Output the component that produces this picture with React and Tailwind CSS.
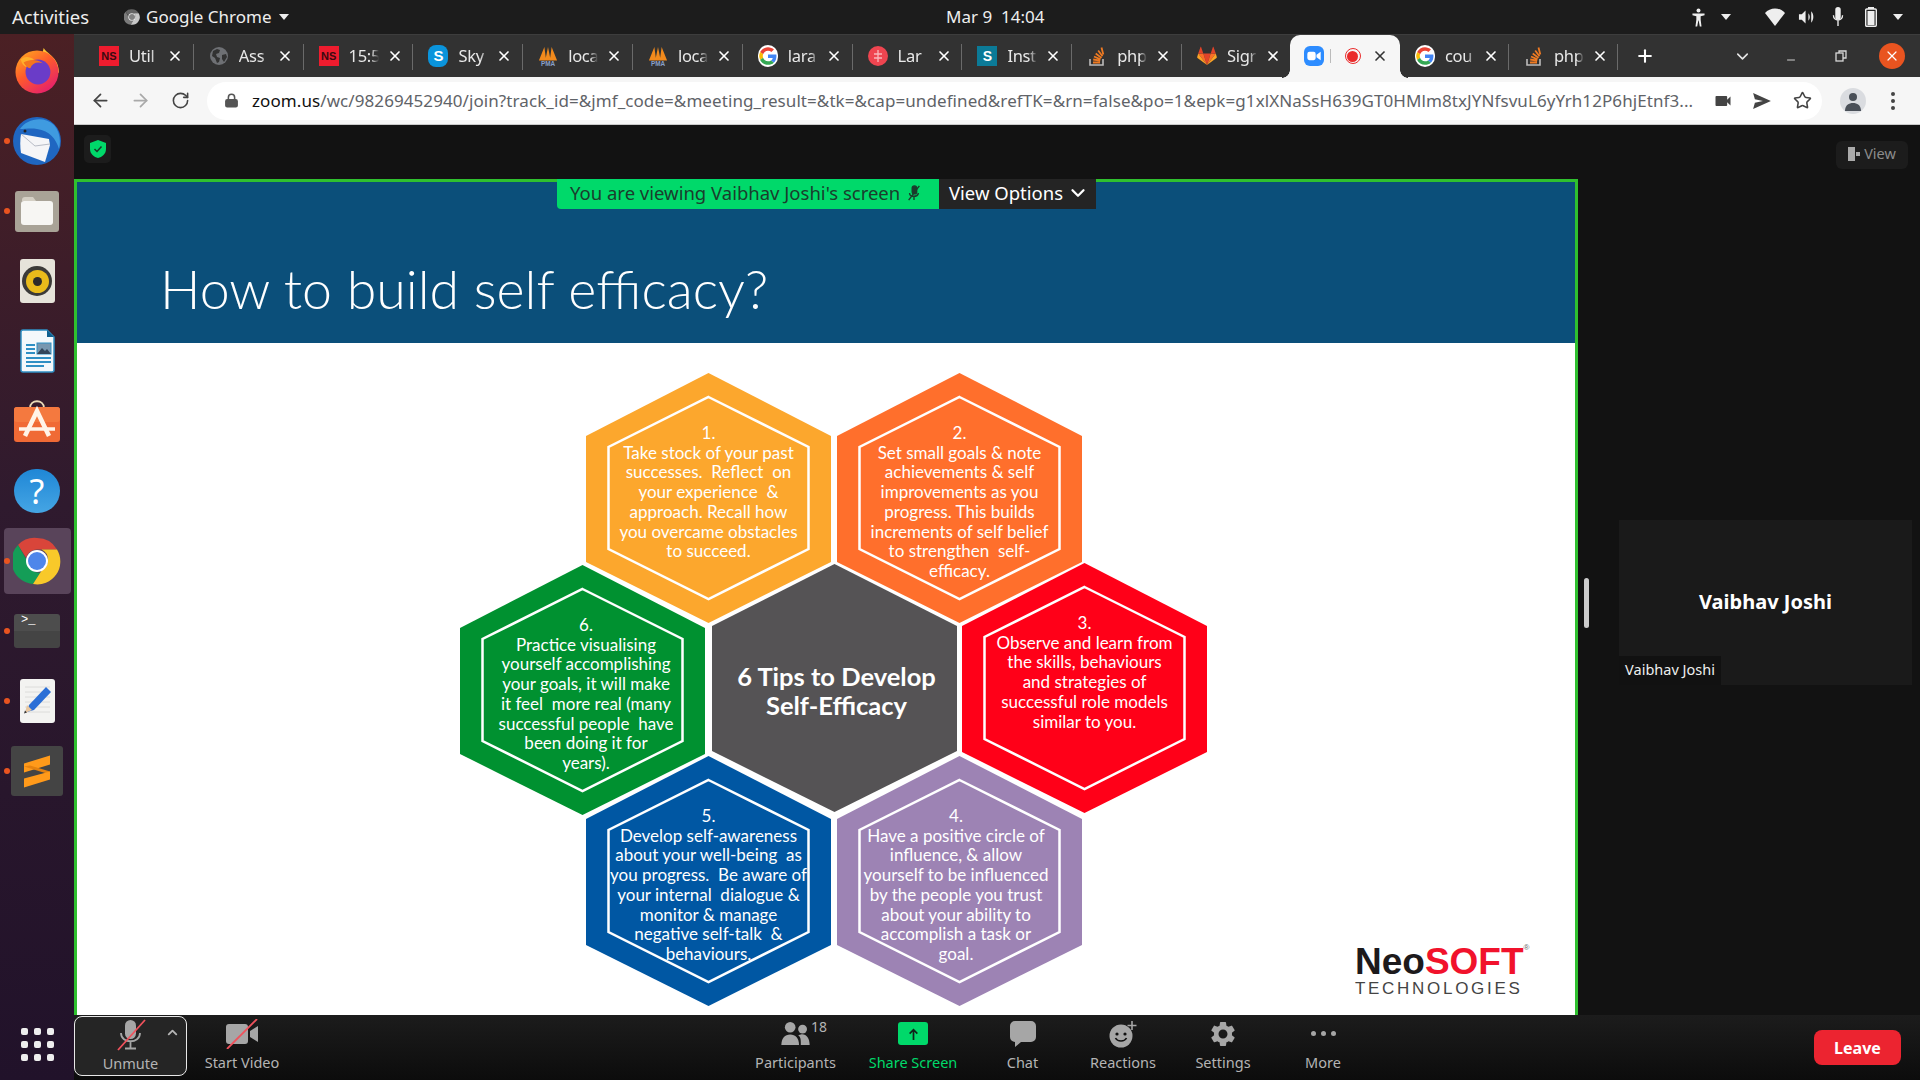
import { ArrowLeft, ArrowRight, RotateCw, Lock, Star, X, Plus, ChevronDown, ChevronUp, Minus } from "lucide-react"
import { MdSettings, MdVideocam } from "react-icons/md"

// favicons for the browser tabs
function NsIcon() {
  return (
    <span className="flex h-[20px] w-[20px] items-center justify-center bg-[#ee1c2e] font-['Liberation_Sans'] text-[11px] font-bold text-[#3a0a10]">NS</span>
  )
}

function GoogleIcon() {
  return (
    <svg viewBox="0 0 48 48" className="h-[22px] w-[22px] rounded-full bg-white p-[1px]">
      <path fill="#ea4335" d="M24 10c3.5 0 6.600 1.200 9.100 3.500l6.800-6.800C35.700 2.900 30.300.5 24 .5 14.800.5 6.900 5.800 3 13.500l7.900 6.100C12.800 14 17.900 10 24 10z" />
      <path fill="#4285f4" d="M46.500 24.500c0-1.600-.1-3.100-.4-4.500H24v9h12.700c-.6 2.900-2.200 5.400-4.700 7l7.600 5.900c4.400-4.100 6.900-10.100 6.900-17.400z" />
      <path fill="#fbbc05" d="M10.900 28.400c-.5-1.400-.8-2.900-.8-4.400s.3-3 .8-4.400L3 13.500C1.400 16.700.5 20.200.5 24s.9 7.300 2.500 10.500l7.900-6.100z" />
      <path fill="#34a853" d="M24 47.500c6.300 0 11.700-2.100 15.600-5.700L32 35.900c-2.100 1.400-4.800 2.300-8 2.300-6.100 0-11.200-4.100-13.100-9.700L3 34.500C6.900 42.200 14.800 47.500 24 47.500z" />
    </svg>
  )
}

function GlobeIcon() {
  return (
    <svg viewBox="0 0 20 20" className="h-[20px] w-[20px]">
      <circle cx="10" cy="10" r="9" fill="#6e7074" />
      <path fill="#323232" d="M4 5l4-2 3 1-1 3-3 1 1 3 3 1-1 4-2 1-2-5-3-2zM13 9l4-1 1 3-3 5-2-3z" />
    </svg>
  )
}

function SkypeIcon() {
  return (
    <span className="flex h-[22px] w-[20px] items-center justify-center rounded-[8px] bg-[#0a94dc] font-['Liberation_Sans'] text-[15px] font-bold text-white">S</span>
  )
}

function PmaIcon() {
  return (
    <svg viewBox="0 0 22 24" className="h-[24px] w-[21px]">
      <path fill="#f28a1c" d="M1 17L7 2l2 15zM8 17l3-15 3 15zM13 17L15 2l6 15z" />
      <text x="11" y="23" textAnchor="middle" fontSize="7" fontWeight="700" fill="#8aa0c8" fontFamily="Liberation Sans">PMA</text>
    </svg>
  )
}

function LaravelIcon() {
  return (
    <svg viewBox="0 0 20 20" className="h-[20px] w-[20px]">
      <circle cx="10" cy="10" r="10" fill="#ef4550" />
      <path stroke="#f9b7bb" strokeWidth="1.300" fill="none" d="M10 4v12M6 8h8M6 12h8" />
    </svg>
  )
}

function TealSIcon() {
  return (
    <span className="flex h-[20px] w-[20px] items-center justify-center bg-[#0b7a97] font-['Liberation_Sans'] text-[14px] font-bold text-white">S</span>
  )
}

function StackIcon() {
  return (
    <svg viewBox="0 0 20 22" className="h-[22px] w-[20px]" fill="none">
      <path stroke="#bcbbbb" strokeWidth="1.600" d="M3 14v6h13v-6" />
      <path stroke="#ef7a22" strokeWidth="1.800" d="M6 17.500h7M6.200 14.500l7 1.200M7 11.500l6.500 2.800M8.700 8.500l5.800 4.400M11.200 5.500l4.300 5.800M14.500 2.500l1.800 7" />
    </svg>
  )
}

function GitlabIcon() {
  return (
    <svg viewBox="0 0 20 20" className="h-[22px] w-[22px]">
      <path fill="#e24329" d="M10 19L13.700 7.500H6.300z" />
      <path fill="#fc6d26" d="M10 19L6.300 7.500H1.200zM10 19l3.700-11.500h5.100z" />
      <path fill="#fca326" d="M1.200 7.500L.2 11c-.1.400 0 .7.300.9L10 19zM18.800 7.500l1 3.500c.1.400 0 .7-.3.900L10 19z" />
      <path fill="#e24329" d="M1.200 7.500h5.100L4.100 1c-.1-.3-.5-.3-.6 0zM18.800 7.500h-5.100L15.900 1c.1-.3.500-.3.600 0z" />
    </svg>
  )
}

function ZoomTabIcon() {
  return (
    <span className="flex h-[20px] w-[20px] items-center justify-center rounded-[6px] bg-[#2d8cff]">
      <svg viewBox="0 0 16 12" className="h-[10px] w-[14px]" fill="white">
        <rect x="0" y="1" width="10" height="10" rx="2.500" />
        <path d="M11 4.500L16 1v10l-5-3.500z" />
      </svg>
    </span>
  )
}

function RecordIcon() {
  return (
    <span className="flex h-[16px] w-[16px] items-center justify-center rounded-full border border-[#ea2b2b]">
      <span className="h-[11px] w-[11px] rounded-full bg-[#ea2b2b]" />
    </span>
  )
}

const tabs = [
  { icon: <NsIcon />, title: "Util" },
  { icon: <GlobeIcon />, title: "Ass" },
  { icon: <NsIcon />, title: "15:5" },
  { icon: <SkypeIcon />, title: "Sky" },
  { icon: <PmaIcon />, title: "loca" },
  { icon: <PmaIcon />, title: "loca" },
  { icon: <GoogleIcon />, title: "lara" },
  { icon: <LaravelIcon />, title: "Lar" },
  { icon: <TealSIcon />, title: "Inst" },
  { icon: <StackIcon />, title: "php" },
  { icon: <GitlabIcon />, title: "Sigr" },
  { active: true },
  { icon: <GoogleIcon />, title: "cou", width: "w-[109px]" },
  { icon: <StackIcon />, title: "php", width: "w-[109px]" },
]

function ChromeTab({ tab, hideSep }) {
  if (tab.active) {
    return (
      <div className="relative ml-[-2px] flex h-[43px] w-[110.200px] shrink-0 items-center rounded-t-[10px] bg-[#f6f6f6] pl-[14px] text-[#333]">
        <span className="absolute bottom-0 left-[-8px] h-[8px] w-[8px] bg-[radial-gradient(circle_at_0_0,#323232_7.500px,#f6f6f6_8px)]" />
        <span className="absolute bottom-0 right-[-8px] h-[8px] w-[8px] bg-[radial-gradient(circle_at_100%_0,#323232_7.500px,#f6f6f6_8px)]" />
        <ZoomTabIcon />
        <span className="ml-[6px] h-[14px] w-[1px] bg-[#bbb]" />
        <span className="ml-[14px]"><RecordIcon /></span>
        <X size={16} strokeWidth={2.500} className="ml-[11px]" />
      </div>
    )
  }
  return (
    <div className={`relative flex h-[43px] shrink-0 items-center pl-[15px] text-[#e8e8e8] ${tab.width || "w-[109.800px]"}`}>
      <span className="flex w-[20px] justify-center">{tab.icon}</span>
      <span className="ml-[10px] w-[30px] overflow-hidden whitespace-nowrap font-['Noto_Sans'] text-[16.500px] tracking-[-0.3px] [mask-image:linear-gradient(to_right,black_75%,transparent)]">{tab.title}</span>
      <X size={16} strokeWidth={2.500} className="ml-[8px] shrink-0 text-white" />
      {!hideSep && <span className="absolute right-0 top-[9px] h-[26px] w-[1px] bg-[#6a6a6a]" />}
    </div>
  )
}

// dock icons
function FirefoxIcon() {
  return (
    <svg viewBox="0 0 46 48" className="h-[46px] w-[44px]">
      <defs>
        <linearGradient id="ffx" x1="0" y1="0" x2="0.7" y2="1">
          <stop offset="0" stopColor="#ffb21e" />
          <stop offset="0.5" stopColor="#ff5a2c" />
          <stop offset="1" stopColor="#e5206b" />
        </linearGradient>
      </defs>
      <path fill="#ffc933" d="M30 0c3 5 9 7 13 14 3 5 3 12 3 12L26 16z" />
      <circle cx="23" cy="25" r="22.500" fill="url(#ffx)" />
      <path fill="#ffb02c" d="M6 12c4-4 10-3 14 0-5 1-8 4-8 8-3-1-5-4-6-8z" />
      <circle cx="24" cy="25" r="13" fill="#6a3cc8" />
      <path fill="#f5751f" d="M9 15c5-3 14-4 20 1-6-2-11 0-13 5-2 0-5-2-7-6z" />
    </svg>
  )
}

function ThunderbirdIcon() {
  return (
    <svg viewBox="0 0 50 48" className="h-[48px] w-[50px]">
      <circle cx="25" cy="24" r="24" fill="#1f66c1" />
      <path fill="#3f9be0" d="M8 12C14 2 32-2 42 8c6 7 7 16 5 24-3-10-9-18-22-20-6-1-12 0-17 0z" />
      <path fill="#f5f5f7" d="M9 17l28 5 1 6-5 17L9 36c-1-6-1-13 0-19z" />
      <path fill="none" stroke="#b8bcc6" strokeWidth="1" d="M9 17l14 12 15-2" />
      <circle cx="13" cy="14" r="1.500" fill="#222" />
    </svg>
  )
}

function FilesIcon() {
  return (
    <span className="flex h-[41px] w-[44px] items-center justify-center rounded-[3px] bg-[#a9a397]">
      <svg viewBox="0 0 32 28" className="h-[30px] w-[32px]">
        <path fill="#d4cfc4" d="M1 3a3 3 0 013-3h8l3 4h-14z" />
        <rect x="0" y="4" width="32" height="24" rx="3" fill="#f7f6f3" />
      </svg>
    </span>
  )
}

function RhythmboxIcon() {
  return (
    <span className="flex h-[44px] w-[35px] items-center justify-center rounded-[3px] bg-[#e6e3da]">
      <span className="flex h-[30px] w-[30px] items-center justify-center rounded-full bg-[#3b3a38]">
        <span className="flex h-[23px] w-[23px] items-center justify-center rounded-full bg-[#e9bb1b]">
          <span className="h-[9px] w-[9px] rounded-full bg-[#2c2b2a]" />
        </span>
      </span>
    </span>
  )
}

function WriterIcon() {
  return (
    <svg viewBox="0 0 35 44" className="h-[44px] w-[35px]">
      <path fill="#f4f8fb" stroke="#2f8fc4" strokeWidth="1.500" d="M1 3a2 2 0 012-2h24l7 7v33a2 2 0 01-2 2H3a2 2 0 01-2-2z" />
      <path fill="#10608f" d="M27 1l7 7h-7z" />
      <rect x="17" y="14" width="14" height="11" fill="#7897b0" stroke="#2f8fc4" />
      <path fill="#33465a" d="M17 25l5-6 3 3 2-2 4 5z" />
      <rect x="6" y="15" width="9" height="2" fill="#2f8fc4" />
      <rect x="6" y="19" width="9" height="2" fill="#2f8fc4" />
      <rect x="6" y="23" width="9" height="2" fill="#2f8fc4" />
      <rect x="6" y="28" width="25" height="2" fill="#2f8fc4" />
      <rect x="6" y="32" width="25" height="2" fill="#2f8fc4" />
      <rect x="6" y="36" width="18" height="2" fill="#2f8fc4" />
    </svg>
  )
}

function SoftwareIcon() {
  return (
    <svg viewBox="0 0 46 42" className="h-[42px] w-[46px]">
      <path fill="none" stroke="#eadbb8" strokeWidth="1.800" d="M16 8c0-9 14-9 14 0" />
      <rect x="0" y="7" width="46" height="35" rx="3" fill="#f06a35" />
      <rect x="0" y="7" width="46" height="15" rx="3" fill="#f4793f" />
      <path fill="none" stroke="#fff4e8" strokeWidth="4.500" d="M11 36L23 11l12 25" />
      <path fill="none" stroke="#fff4e8" strokeWidth="3.500" d="M5 29h36" />
    </svg>
  )
}

function HelpIcon() {
  return (
    <span className="flex h-[44px] w-[46px] items-center justify-center rounded-full bg-[linear-gradient(#1f87d6,#45a5e4)] font-['Noto_Sans'] text-[34px] leading-none text-white">?</span>
  )
}

function ChromeIcon({ className }) {
  return (
    <svg viewBox="0 0 48 48" className={className}>
      <path fill="#d9453a" d="M24 1a23 23 0 0120 11.500H24a11.500 11.500 0 00-11 8L5 8A23 23 0 0124 1z" />
      <path fill="#149d57" d="M5 8l9.500 16.500a11.500 11.500 0 0013.500 11L20 47A23 23 0 015 8z" />
      <path fill="#f8c92a" d="M44 12.500A23 23 0 0120 47l9-14a11.500 11.500 0 00-.5-20.500z" />
      <circle cx="24" cy="24" r="11" fill="#fff" />
      <circle cx="24" cy="24" r="9" fill="#4e86ea" />
    </svg>
  )
}

function TerminalIcon() {
  return (
    <span className="block h-[34px] w-[46px] rounded-[3px] bg-[linear-gradient(#4d4d4d_50%,#444_50%)] pl-[7px] font-['Liberation_Mono'] text-[12px] leading-[12px] text-white">&gt;_</span>
  )
}

function GeditIcon() {
  return (
    <svg viewBox="0 0 35 44" className="h-[44px] w-[35px]">
      <rect width="35" height="44" rx="3" fill="#f3f3f1" />
      <path stroke="#dcdcda" strokeWidth="1" d="M5 8h25M5 13h25M5 18h25M5 23h25M5 28h25M5 33h25" />
      <path fill="#2b6fd6" d="M26 8l5 5-17 18-7 2 2-7z" />
      <path fill="#e8c7a0" d="M7 26l5 5-7 3z" />
      <path fill="#333" d="M5 31.500l2 2-3 1z" />
    </svg>
  )
}

function SublimeIcon() {
  return (
    <span className="flex h-[50px] w-[52px] items-center justify-center rounded-[3px] bg-[#444444]">
      <svg viewBox="0 0 28 32" className="h-[33px] w-[28px]">
        <path fill="#ff9a1a" d="M27 0v9L1 17V8z" />
        <path fill="#e5820f" d="M1 11l26 8v-3L7 10z" />
        <path fill="#ff9a1a" d="M27 16v8L1 32v-9z" />
      </svg>
    </span>
  )
}

const dockItems = [
  { icon: <FirefoxIcon /> },
  { icon: <ThunderbirdIcon />, running: true },
  { icon: <FilesIcon />, running: true },
  { icon: <RhythmboxIcon /> },
  { icon: <WriterIcon /> },
  { icon: <SoftwareIcon /> },
  { icon: <HelpIcon /> },
  { icon: <ChromeIcon className="h-[48px] w-[48px]" />, running: true, current: true },
  { icon: <TerminalIcon />, running: true },
  { icon: <GeditIcon />, running: true },
  { icon: <SublimeIcon />, running: true },
]

function Dock() {
  return (
    <div className="flex w-[74px] shrink-0 flex-col items-center bg-[linear-gradient(#4b2024,#2f1a2e_45%,#21122a)] pt-[2px] pb-[19px]">
      {dockItems.map((item, i) => (
        <div key={i} className="relative flex h-[70px] w-[74px] items-center justify-center">
          {item.current && <span className="absolute left-[4px] top-[2px] h-[66px] w-[67px] rounded-[4px] bg-[#59445a]" />}
          {item.running && <span className="absolute left-[4px] top-[32px] h-[6px] w-[6px] rounded-full bg-[#e95420]" />}
          <span className="relative flex">{item.icon}</span>
        </div>
      ))}
      <div className="mt-auto grid grid-cols-3 gap-x-[6px] gap-y-[6px]">
        {[0, 1, 2, 3, 4, 5, 6, 7, 8].map((d) => (
          <span key={d} className="h-[7px] w-[7px] rounded-[2px] bg-[#eeeeee]" />
        ))}
      </div>
    </div>
  )
}

function TopBar() {
  return (
    <div className="relative flex h-[34px] shrink-0 items-center bg-[#1c1c1c] font-['Noto_Sans'] text-[16px] text-[#eeeeee]">
      <span className="ml-[12px] text-[18.500px]">Activities</span>
      <span className="ml-[35px]"><ChromeIcon className="h-[16px] w-[16px] grayscale" /></span>
      <span className="ml-[6px] text-[17px]">Google Chrome</span>
      <span className="ml-[7px] h-0 w-0 border-x-[5px] border-t-[6px] border-x-transparent border-t-[#eeeeee]" />
      <span className="absolute left-[946px] top-[4px] whitespace-pre text-[17px]">Mar 9  14:04</span>
      <div className="ml-auto mr-[17px] flex items-center">
        <svg viewBox="0 0 16 22" className="h-[19px] w-[15px]" fill="#eee">
          <circle cx="8" cy="3" r="2.300" />
          <path d="M1 6.500h14v2l-4.500 1v4l1 8h-2l-1.300-7h-.4L6.500 21.500h-2l1-8v-4L1 8.500z" />
        </svg>
        <span className="ml-[15.500px] h-0 w-0 border-x-[5px] border-t-[6px] border-x-transparent border-t-[#eeeeee]" />
        <svg viewBox="0 0 20 18" className="ml-[34px] h-[18px] w-[20px]" fill="#eee"><path d="M0 5c5-6 15-6 20 0L10 18z" /></svg>
        <svg viewBox="0 0 18 18" className="ml-[12.500px] h-[18px] w-[17px]" fill="#eee"><path d="M1 6h3l4-4v14l-4-4H1zM11 5c2 2 2 6 0 8zM14 3c3 3 3 9 0 12z" /></svg>
        <svg viewBox="0 0 12 22" className="ml-[17.500px] h-[20px] w-[12px]" fill="none"><rect x="3" y="0" width="6" height="14" rx="3" fill="#eee" /><path stroke="#eee" strokeWidth="1.500" d="M1 9c0 7 10 7 10 0M6 15v6" /></svg>
        <svg viewBox="0 0 12 20" className="ml-[21px] h-[20px] w-[12px]"><rect x="3" y="0" width="6" height="2" fill="#eee" /><rect x="0.700" y="2" width="10.600" height="17.300" rx="1" fill="#222" stroke="#eee" strokeWidth="1.400" /><rect x="2.500" y="4" width="7" height="14" fill="#eee" /></svg>
        <span className="ml-[16px] h-0 w-0 border-x-[5px] border-t-[6px] border-x-transparent border-t-[#eeeeee]" />
      </div>
    </div>
  )
}

function TabStrip() {
  return (
    <div className="flex h-[43px] shrink-0 items-center border-t border-t-[#3d3d3d] bg-[#323232] pl-[10px]">
      {tabs.map((tab, i) => (
        <ChromeTab key={i} tab={tab} hideSep={i === 10 || tab.active} />
      ))}
      <Plus size={20} strokeWidth={2.500} className="ml-[17px] text-white" />
      <ChevronDown size={19} strokeWidth={2} className="ml-[78px] text-[#e6e6e6]" />
      <Minus size={12} strokeWidth={2} className="ml-[33px] mt-[8px] text-[#cfcfcf]" />
      <svg viewBox="0 0 12 12" className="ml-[38px] h-[12px] w-[12px]" fill="none" stroke="#d8d8d8" strokeWidth="1.300"><rect x="1" y="3" width="7" height="8" /><path d="M4 3V1h7v7H8" /></svg>
      <span className="ml-[32px] flex h-[26px] w-[26px] items-center justify-center rounded-full bg-[#e95420]">
        <X size={16} strokeWidth={1.800} className="text-white" />
      </span>
    </div>
  )
}

function UrlBar() {
  return (
    <div className="flex h-[48px] shrink-0 items-center border-b border-b-[#c9c9c9] bg-[#f6f6f6]">
      <ArrowLeft size={21} strokeWidth={2} className="ml-[16px] text-[#444]" />
      <ArrowRight size={21} strokeWidth={2} className="ml-[19px] text-[#a9a9a9]" />
      <RotateCw size={19} strokeWidth={2} className="ml-[20px] text-[#444]" />
      <div className="ml-[17px] flex h-[38px] w-[1615px] items-center rounded-full bg-white pl-[17px]">
        <Lock size={15} strokeWidth={2.500} className="text-[#555] [&_rect]:fill-[#555]" />
        <span className="ml-[13px] w-[1442px] whitespace-nowrap font-['Noto_Sans'] text-[17px] tracking-[0.08px] text-[#5f6368]">
          <span className="text-[#111]">zoom.us</span>/wc/98269452940/join?track_id=&amp;jmf_code=&amp;meeting_result=&amp;tk=&amp;cap=undefined&amp;refTK=&amp;rn=false&amp;po=1&amp;epk=g1xlXNaSsH639GT0HMlm8txJYNfsvuL6yYrh12P6hjEtnf3...
        </span>
        <MdVideocam size={20} className="ml-[19px] text-[#444]" />
        <svg viewBox="0 0 20 18" className="ml-[20px] h-[16px] w-[18px]" fill="#444"><path d="M0 0l20 9-20 9 2-7 9-2-9-2z" /></svg>
        <Star size={19} strokeWidth={2} className="ml-[22px] text-[#444]" />
      </div>
      <span className="ml-[18px] flex h-[26px] w-[26px] items-center justify-center overflow-hidden rounded-full bg-[#dadce0]">
        <svg viewBox="0 0 20 20" className="h-[20px] w-[20px]" fill="#4a5058"><circle cx="10" cy="6" r="4" /><path d="M2 20c0-6 4-8 8-8s8 2 8 8z" /></svg>
      </span>
      <span className="ml-[25px] flex flex-col gap-[3px]">
        <span className="h-[4px] w-[4px] rounded-full bg-[#444]" />
        <span className="h-[4px] w-[4px] rounded-full bg-[#444]" />
        <span className="h-[4px] w-[4px] rounded-full bg-[#444]" />
      </span>
    </div>
  )
}

const hexes = [
  { num: "1.", pos: "left-[509px] top-[30px]", fill: "#fca72d", lines: ["Take stock of your past", "successes.  Reflect  on", "your experience  &", "approach. Recall how", "you overcame obstacles", "to succeed."] },
  { num: "2.", pos: "left-[760px] top-[30px]", fill: "#ff6f2c", lines: ["Set small goals & note", "achievements & self", "improvements as you", "progress. This builds", "increments of self belief", "to strengthen  self-", "efficacy."] },
  { num: "6.", pos: "left-[383px] top-[222px]", fill: "#009130", shift: "pl-[7px]", lines: ["Practice visualising", "yourself accomplishing", "your goals, it will make", "it feel  more real (many", "successful people  have", "been doing it for", "years)."] },
  { num: "3.", pos: "left-[885px] top-[220px]", fill: "#ff0018", lines: ["Observe and learn from", "the skills, behaviours", "and strategies of", "successful role models", "similar to you."] },
  { num: "5.", pos: "left-[509px] top-[413px]", fill: "#0057a3", lines: ["Develop self-awareness", "about your well-being  as", "you progress.  Be aware of", "your internal  dialogue &", "monitor & manage", "negative self-talk  &", "behaviours."] },
  { num: "4.", pos: "left-[760px] top-[413px]", fill: "#9d83b4", shift: "pr-[7px]", lines: ["Have a positive circle of", "influence, & allow", "yourself to be influenced", "by the people you trust", "about your ability to", "accomplish a task or", "goal."] },
]

function Hexagon({ hex }) {
  return (
    <div className={`absolute h-[250px] w-[245px] ${hex.pos}`}>
      <svg viewBox="0 0 245 250" className="absolute inset-0 h-full w-full">
        <polygon points="122.500,0 245,63 245,189 122.500,250 0,189 0,63" fill={hex.fill} />
        <polygon points="122.500,24 222.500,74 222.500,176 122.500,226 22.500,176 22.500,74" fill="none" stroke="#fff" strokeWidth="2.500" />
      </svg>
      <div className={`relative whitespace-pre pt-[50px] text-center font-['Lato'] text-[17px] leading-[19.7px] text-white ${hex.shift || ""}`}>
        <div>{hex.num}</div>
        {hex.lines.map((line, i) => (
          <div key={i}>{line}</div>
        ))}
      </div>
    </div>
  )
}

function Slide() {
  return (
    <div className="relative flex w-[1504px] shrink-0 flex-col border-x-[3px] border-t-[3px] border-x-[#2fc02f] border-t-[#2fc02f]">
      <div className="flex h-[161px] shrink-0 items-center bg-[#0b4f7a] pl-[83px] pt-[53px]">
        <h1 className="font-['Lato'] text-[53.700px] font-light leading-none text-white">How to build self efficacy?</h1>
      </div>
      <div className="relative flex-1 bg-white">
        {hexes.map((hex) => (
          <Hexagon key={hex.num} hex={hex} />
        ))}
        <div className="absolute left-[635px] top-[221px] h-[248px] w-[245px]">
          <svg viewBox="0 0 245 248" className="absolute inset-0 h-full w-full">
            <polygon points="122.500,0 245,62 245,187 122.500,248 0,187 0,62" fill="#555355" />
          </svg>
          <div className="relative pl-[4px] pt-[98px] text-center font-['Lato'] text-[25.500px] font-bold leading-[29px] text-white">
            <div>6 Tips to Develop</div>
            <div>Self-Efficacy</div>
          </div>
        </div>
        <div className="absolute left-[1278px] top-[600px] w-[180px] font-['Liberation_Sans'] font-bold">
          <div className="flex text-[37px] leading-[37px]">
            <span className="text-[#1d1a1c]">Neo</span>
            <span className="text-[#f1122c]">SOFT</span>
            <span className="mt-[-1px] text-[8px] font-normal leading-[12px] text-[#666]">®</span>
          </div>
          <div className="mt-[-1px] text-[17px] font-normal leading-[20px] tracking-[2.700px] text-[#444]">TECHNOLOGIES</div>
        </div>
      </div>

      {/* share banner over the top of the slide */}
      <div className="absolute left-[480px] top-[-3px] flex h-[30px] items-center font-['Noto_Sans'] text-[18.500px]">
        <div className="flex h-full w-[382px] items-center rounded-bl-[4px] bg-[#00d96a] pb-[2px] pl-[13px] text-[#1b3d2d]">
          You are viewing Vaibhav Joshi's screen
          <svg viewBox="0 0 14 18" className="ml-[7px] h-[16px] w-[14px]" fill="none" stroke="#1b3d2d" strokeWidth="1.600"><rect x="5" y="1" width="5" height="9" rx="2.500" fill="#1b3d2d" /><path d="M2 9c0 5 9 5 10 0M7 13v4M1 17L13 1" /></svg>
        </div>
        <div className="flex h-full w-[157px] items-center bg-[#242424] pb-[2px] pl-[10px] text-white">
          View Options
          <ChevronDown size={22} strokeWidth={2.500} className="ml-[4px]" />
        </div>
      </div>
    </div>
  )
}

function SidePanel() {
  return (
    <div className="relative flex-1">
      <span className="absolute left-[6px] top-[399px] h-[50px] w-[5px] rounded-full bg-[#cccccc]" />
      <div className="ml-[41px] mt-[341px] flex h-[165px] w-[293px] flex-col bg-[#1a1a1a] font-['Noto_Sans'] text-white">
        <div className="flex flex-1 items-center justify-center pt-[28px] text-[20px] font-bold">Vaibhav Joshi</div>
        <div className="flex h-[29px] w-[102px] items-center justify-center bg-[#111111] pb-[2px] text-[14.500px] text-[#eeeeee]">Vaibhav Joshi</div>
      </div>
    </div>
  )
}

function MeetingTop() {
  return (
    <div className="flex h-[54px] shrink-0 items-start">
      <span className="ml-[10px] mt-[10px] flex h-[28px] w-[27px] items-center justify-center rounded-[5px] bg-[#1c1c1c]">
        <svg viewBox="0 0 16 18" className="h-[18px] w-[16px]">
          <path fill="#00d96a" d="M8 0l8 3v6c0 5-4 8-8 9-4-1-8-4-8-9V3z" />
          <path fill="none" stroke="#173a2a" strokeWidth="1.500" d="M4.500 9l2.500 2.500 4.500-5" />
        </svg>
      </span>
      <span className="ml-auto mr-[12px] mt-[16px] flex h-[28px] w-[72px] items-center justify-center gap-[4px] rounded-[6px] bg-[#1c1c1c] pb-[2px] font-['Noto_Sans'] text-[14.500px] text-[#8c8c8c]">
        <svg viewBox="0 0 12 14" className="h-[14px] w-[12px]" fill="#aaa"><rect x="0" y="0" width="7" height="14" /><rect x="8" y="5" width="4" height="4" /></svg>
        View
      </span>
    </div>
  )
}

function ToolButton({ label, className, children, labelColor }) {
  return (
    <div className={`flex shrink-0 flex-col items-center ${className}`}>
      <div className="flex h-[35px] items-center justify-center">{children}</div>
      <span className={`mt-[1px] whitespace-nowrap text-[14.500px] leading-[20px] ${labelColor || "text-[#b4b4b4]"}`}>{label}</span>
    </div>
  )
}

function MutedMic() {
  return (
    <svg viewBox="0 0 30 32" className="h-[32px] w-[30px]" fill="none">
      <rect x="9" y="1" width="11" height="19" rx="5.500" fill="#a6a6a6" />
      <path stroke="#a6a6a6" strokeWidth="1.800" d="M5 14c0 11 19 11 19 0M14.500 23v6M9 29.500h11" />
      <path stroke="#f0525c" strokeWidth="1.800" d="M2 31L29 1" />
    </svg>
  )
}

function MutedCamera() {
  return (
    <svg viewBox="0 0 32 30" className="h-[30px] w-[32px]" fill="none">
      <rect x="0" y="5" width="22" height="20" rx="3" fill="#a6a6a6" />
      <path fill="#a6a6a6" d="M24 12l8-5v16l-8-5z" />
      <path stroke="#f0525c" strokeWidth="1.800" d="M1 30L31 0" />
    </svg>
  )
}

function MeetingToolbar() {
  return (
    <div className="flex h-[65px] shrink-0 items-start bg-[linear-gradient(#1c1c1c,#0c0c0c)] font-['Noto_Sans']">
      <div className="relative mt-[1px] flex h-[60px] w-[113px] shrink-0 flex-col items-center rounded-[8px] border border-[#e8e8e8] bg-[#252525]">
        <div className="flex h-[35px] items-center justify-center"><MutedMic /></div>
        <span className="mt-[1px] text-[14.500px] leading-[20px] text-[#b4b4b4]">Unmute</span>
        <ChevronUp size={15} strokeWidth={3} className="absolute right-[6px] top-[8px] text-[#b4b4b4]" />
      </div>
      <ToolButton label="Start Video" className="mt-[1px] w-[110px]"><MutedCamera /></ToolButton>

      <div className="ml-[440px] mt-[1px] flex">
        <ToolButton label="Participants" className="w-[117px]">
          <div className="relative">
            <svg viewBox="0 0 32 26" className="h-[23px] w-[31px]" fill="#a6a6a6">
              <circle cx="10" cy="6" r="6" />
              <path d="M0 26c0-8 4-12 10-12s10 4 10 12z" />
              <circle cx="24" cy="8" r="5" />
              <path d="M22 14c6-1 10 4 10 12h-10c0-6 0-9-3-11z" />
            </svg>
            <span className="absolute left-[31px] top-[-5px] text-[14px] leading-[19px] text-[#b4b4b4]">18</span>
          </div>
        </ToolButton>
        <ToolButton label="Share Screen" className="w-[118px]" labelColor="text-[#00d96a]">
          <span className="flex h-[23px] w-[30px] items-center justify-center rounded-[3px] bg-[#00d96a]">
            <svg viewBox="0 0 12 14" className="h-[12px] w-[11px]" fill="none" stroke="#10241a" strokeWidth="2"><path d="M6 14V2M1.500 6.500L6 2l4.500 4.500" /></svg>
          </span>
        </ToolButton>
        <ToolButton label="Chat" className="w-[101px]">
          <svg viewBox="0 0 26 26" className="h-[26px] w-[26px]" fill="#a6a6a6"><path d="M5 0h16a5 5 0 015 5v11a5 5 0 01-5 5H11l-6 5v-5a5 5 0 01-5-5V5a5 5 0 015-5z" /></svg>
        </ToolButton>
        <ToolButton label="Reactions" className="w-[100px]">
          <svg viewBox="0 0 28 28" className="h-[28px] w-[28px]">
            <circle cx="12" cy="16" r="11.500" fill="#a6a6a6" />
            <circle cx="8" cy="14" r="1.600" fill="#111" />
            <circle cx="16" cy="14" r="1.600" fill="#111" />
            <path d="M6.500 18c2 4 9 4 11 0" fill="none" stroke="#111" strokeWidth="1.600" />
            <path d="M23 1v9M18.500 5.500h9" stroke="#a6a6a6" strokeWidth="1.600" />
          </svg>
        </ToolButton>
        <ToolButton label="Settings" className="w-[100px]"><MdSettings size={30} className="text-[#a6a6a6]" /></ToolButton>
        <ToolButton label="More" className="w-[100px]">
          <span className="flex gap-[5px]">
            <span className="h-[5px] w-[5px] rounded-full bg-[#a6a6a6]" />
            <span className="h-[5px] w-[5px] rounded-full bg-[#a6a6a6]" />
            <span className="h-[5px] w-[5px] rounded-full bg-[#a6a6a6]" />
          </span>
        </ToolButton>
      </div>

      <button className="ml-auto mr-[19px] mt-[15px] h-[35px] w-[87px] rounded-[8px] bg-[#ec2430] text-[16px] font-bold text-white">Leave</button>
    </div>
  )
}

export default function App() {
  return (
    <div className="flex h-[1080px] w-[1920px] flex-col overflow-hidden bg-[#121212]">
      <TopBar />
      <div className="flex min-h-0 flex-1">
        <Dock />
        <div className="flex min-w-0 flex-1 flex-col">
          <TabStrip />
          <UrlBar />
          <div className="flex min-h-0 flex-1 flex-col bg-[#121212]">
            <MeetingTop />
            <div className="flex min-h-0 flex-1">
              <Slide />
              <SidePanel />
            </div>
          </div>
          <MeetingToolbar />
        </div>
      </div>
    </div>
  )
}
